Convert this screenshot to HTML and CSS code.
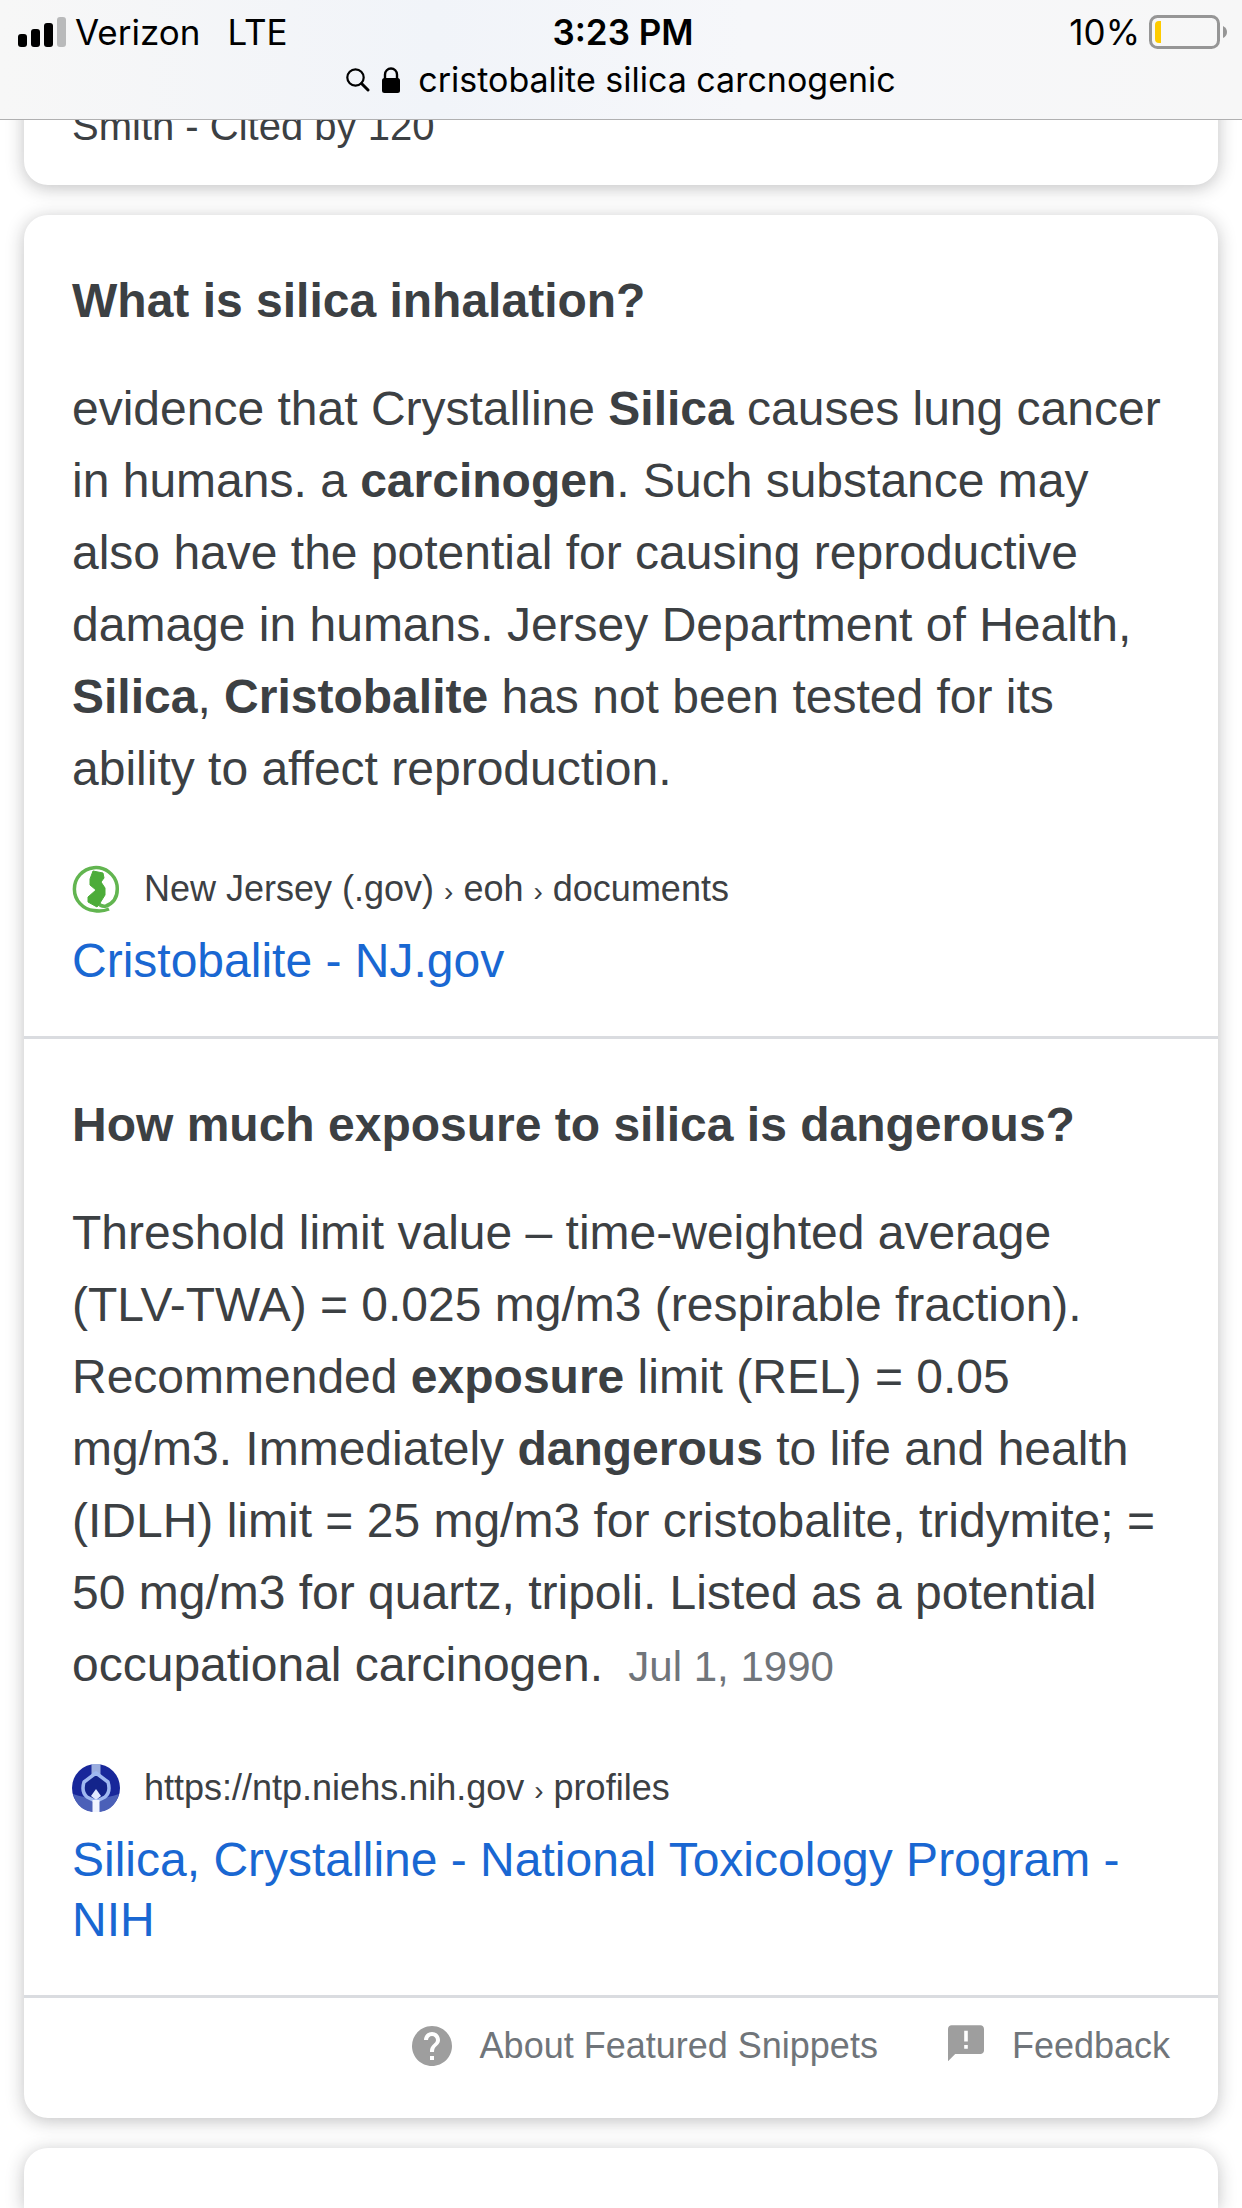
FILE: index.html
```html
<!DOCTYPE html>
<html lang="en">
<head>
<meta charset="utf-8">
<meta name="viewport" content="width=device-width, initial-scale=1">
<title>cristobalite silica carcnogenic</title>
<link rel="stylesheet" href="styles.css">
</head>
<body>
<header class="chrome">
  <div class="status">
    <div class="carrier">
      <svg class="signal" viewBox="0 0 48 30" aria-hidden="true">
        <rect x="0" y="17" width="9" height="13" rx="3"/>
        <rect x="13" y="12" width="9" height="18" rx="3"/>
        <rect x="26" y="6" width="9" height="24" rx="3"/>
        <rect x="39" y="0" width="9" height="30" rx="3" fill="#b9babb"/>
      </svg>
      <span>Verizon</span>
      <span class="network">LTE</span>
    </div>
    <time class="clock">3:23 PM</time>
    <div class="power">
      <span>10%</span>
      <svg class="battery" viewBox="0 0 79 34" aria-hidden="true">
        <rect x="1.5" y="1.5" width="68" height="31" rx="7" fill="none" stroke="#969696" stroke-width="3"/>
        <path d="M12 6H10Q6 6 6 10V24Q6 28 10 28H12Z" fill="#fecb00"/>
        <path d="M74 11Q78 13 78 17T74 23Z" fill="#969696"/>
      </svg>
    </div>
  </div>
  <button class="address" type="button">
    <svg class="search" viewBox="0 0 24 24" aria-hidden="true">
      <circle cx="9.5" cy="9.5" r="8.2" fill="none" stroke="#000" stroke-width="2.2"/>
      <path d="M15.5 15.5L22 22" stroke="#000" stroke-width="3" stroke-linecap="round"/>
    </svg>
    <svg class="lock" viewBox="0 0 18 26" aria-hidden="true">
      <path d="M3 13V7.500a6 6 0 0 1 12 0V13" fill="none" stroke="#000" stroke-width="2.400"/>
      <rect x="0" y="11" width="18" height="15" rx="2.500"/>
    </svg>
    <span>cristobalite silica carcnogenic</span>
  </button>
</header>
<main class="results">
  <article class="card card-scrolled">
    <p class="citation">Smith - Cited by 120</p>
  </article>
  <article class="card">
    <section class="answer">
      <h2 class="question">What is silica inhalation?</h2>
      <p class="snippet">evidence that Crystalline <b>Silica</b> causes lung cancer in humans. a <b>carcinogen</b>. Such substance may also have the potential for causing reproductive damage in humans. Jersey Department of Health, <b>Silica</b>, <b>Cristobalite</b> has not been tested for its ability to affect reproduction.</p>
      <div class="source">
        <svg class="favicon" viewBox="0 0 48 48" aria-hidden="true">
          <path d="M37 44Q30 47 22 45.500A21.500 21.500 0 1 1 45 20Q47 36 34 41Q29 42 26 38" fill="none" stroke="#62b550" stroke-width="3.500"/>
          <path d="M21 6L31 8L32 13L29 17L33 23L33 30L28 38L25 42L16 37L16 32L24 25L18 20L18 14Z" fill="#4cac39" stroke="#4cac39" stroke-width="1"/>
        </svg>
        <span>New Jersey (.gov) <span class="sep">›</span> eoh <span class="sep">›</span> documents</span>
      </div>
      <a class="title" href="#">Cristobalite - NJ.gov</a>
    </section>
    <section class="answer">
      <h2 class="question">How much exposure to silica is dangerous?</h2>
      <p class="snippet">Threshold limit value – time-weighted average (TLV-TWA) = 0.025 mg/m3 (respirable fraction). Recommended <b>exposure</b> limit (REL) = 0.05 mg/m3. Immediately <b>dangerous</b> to life and health (IDLH) limit = 25 mg/m3 for cristobalite, tridymite; = 50 mg/m3 for quartz, tripoli. Listed as a potential occupational carcinogen. <time class="date">Jul 1, 1990</time></p>
      <div class="source">
        <svg class="favicon" viewBox="0 0 48 48" aria-hidden="true">
          <circle cx="24" cy="24" r="24" fill="#18279a"/>
          <path d="M1 30Q12 34 24 34T47 30Q42 48 24 48T1 30Z" fill="#4b60b8"/>
          <path d="M24 0V12" stroke="#9aaddf" stroke-width="9"/>
          <path d="M24 9L36 18Q39 28 33 33L25 37H23L15 33Q9 28 12 18Z" fill="#13248b" stroke="#9fb8f0" stroke-width="3.500" stroke-linejoin="round"/>
          <path d="M24 25L29 32L24 36L19 32Z" fill="#dfe8ff"/>
          <path d="M24 36V48" stroke="#f0f4ff" stroke-width="7"/>
        </svg>
        <span>https://ntp.niehs.nih.gov <span class="sep">›</span> profiles</span>
      </div>
      <a class="title" href="#">Silica, Crystalline - National Toxicology Program - NIH</a>
    </section>
    <footer class="actions">
      <a class="action" href="#">
        <svg class="help" viewBox="2 2 20 20" aria-hidden="true"><path fill="#9e9e9e" d="M12 2C6.480 2 2 6.480 2 12s4.480 10 10 10 10-4.480 10-10S17.520 2 12 2zm1 17h-2v-2h2v2zm2.070-7.750l-.900.920C13.450 12.900 13 13.500 13 15h-2v-.500c0-1.100.450-2.100 1.170-2.830l1.240-1.260c.370-.360.590-.860.590-1.410 0-1.100-.900-2-2-2s-2 .900-2 2H8c0-2.210 1.790-4 4-4s4 1.790 4 4c0 .880-.360 1.680-.930 2.250z"/></svg>
        <span>About Featured Snippets</span>
      </a>
      <a class="action" href="#">
        <svg class="flag" viewBox="2 2 20 23" aria-hidden="true"><path fill="#9e9e9e" d="M20 2H4c-1.100 0-2 .900-2 2v18l4-4h14c1.100 0 2-.900 2-2V4c0-1.100-.900-2-2-2zm-7 13h-2v-2h2v2zm0-4h-2V5h2v6z"/></svg>
        <span>Feedback</span>
      </a>
    </footer>
  </article>
  <article class="card card-next"></article>
</main>
</body>
</html>
```
FILE: styles.css
```css
* { box-sizing: border-box; }
body {
  margin: 0;
  min-height: 100vh;
  display: flex;
  flex-direction: column;
  background: #fff;
  color: #3c4043;
  font-family: "Liberation Sans", Arial, sans-serif;
}
h2, p { margin: 0; }
a { color: inherit; text-decoration: none; }
svg { display: block; flex: none; }

.chrome {
  position: sticky;
  top: 0;
  z-index: 1;
  flex: none;
  height: 120px;
  padding-top: 8px;
  border-bottom: 1px solid #b0b0b1;
  background: linear-gradient(90deg, #f7f7f7, #f1f4f9 35%, #f6f7fa 60%, #f7f7f7);
  color: #000;
  font-family: Inter, sans-serif;
  font-size: 35px;
  line-height: 48px;
}
.status {
  display: grid;
  grid-template-columns: 1fr auto 1fr;
  padding: 0 14px 0 18px;
}
.carrier, .power { display: flex; align-items: center; gap: 9px; }
.power { justify-content: flex-end; }
.network { margin-left: 18px; }
.clock { font-weight: 600; }
.signal { width: 48px; height: 30px; }
.battery { width: 79px; height: 34px; }
.address {
  display: flex;
  align-items: center;
  justify-content: center;
  width: 100%;
  padding: 0;
  border: 0;
  background: none;
  color: inherit;
  font: inherit;
  font-size: 34px;
}
.search { width: 24px; height: 24px; margin-right: 12px; }
.lock { width: 18px; height: 26px; margin-right: 18px; }

.results {
  flex: 1;
  display: flex;
  flex-direction: column;
  gap: 30px;
  padding: 0 24px;
}
.card {
  flex: none;
  border-radius: 24px;
  background: #fff;
  box-shadow: 0 3px 18px rgba(32, 33, 36, 0.28);
}
.card-scrolled { margin-top: -48px; padding: 18px 48px 23px; }
.card-next {
  flex: 1;
  min-height: 48px;
  border-radius: 24px 24px 0 0;
}
.citation { font-size: 40px; line-height: 72px; }
.answer { padding: 50px 48px 45px; border-bottom: 3px solid #dadce0; }
.question { margin-bottom: 36px; font-size: 48px; line-height: 72px; }
.snippet { font-size: 48px; line-height: 72px; }
.date { margin-left: 12px; color: #70757a; font-size: 42px; line-height: 74px; }
.source {
  display: flex;
  align-items: center;
  gap: 24px;
  margin: 60px 0 18px;
  font-size: 36px;
  line-height: 48px;
}
.sep { font-size: 28px; line-height: 1; }
.favicon { width: 48px; height: 48px; }
.title { display: block; color: #1967d2; font-size: 48px; line-height: 60px; }
.actions {
  display: flex;
  justify-content: flex-end;
  gap: 70px;
  padding: 24px 48px 48px;
  color: #70757a;
  font-size: 36px;
  line-height: 48px;
}
.action { display: flex; align-items: center; gap: 28px; }
.help { width: 40px; height: 40px; }
.flag { width: 36px; height: 42px; }
```
